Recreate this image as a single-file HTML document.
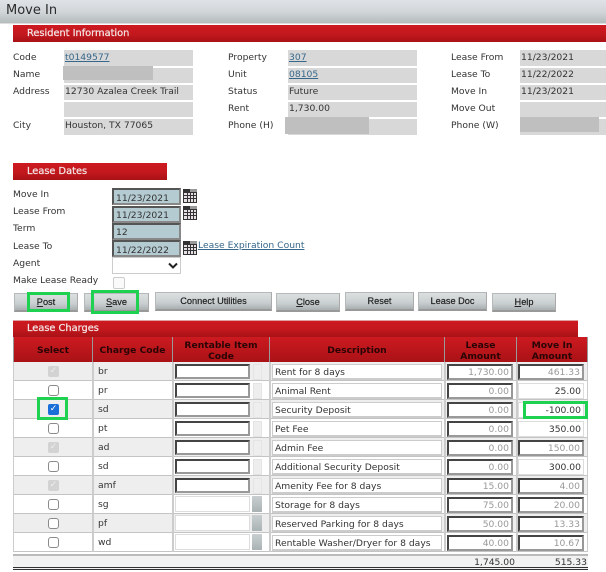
<!DOCTYPE html>
<html><head><meta charset="utf-8"><style>
html,body{margin:0;padding:0;background:#fff}
#p{position:relative;width:606px;height:572px;overflow:hidden;background:#fff;font:9.2px "DejaVu Sans",sans-serif;color:#333;filter:blur(.25px)}
#p div,#p a,#p svg{position:absolute;box-sizing:border-box;white-space:nowrap}
.t{height:14px;line-height:16px}
.b{background:#d8d8d8;line-height:13px;padding-left:1px;color:#333}
.g{background:#bfbfbf}
.red{background:linear-gradient(#cc1a20,#c4181e 50%,#a91216);color:#f3e4e4;font-weight:normal;line-height:18px;font-size:9.8px;padding-left:14px;-webkit-text-stroke:.25px #f3e4e4}
a{color:#36678a;text-decoration:underline}
.d{left:112px;width:69px;background:#b5cbd2;border:2px solid;border-color:#555 #888 #888 #555;line-height:15px;padding-left:2px;padding-top:1px}
.btn{background:linear-gradient(#dcdfe0,#c9cfd0 60%,#a9b0b0);border:1px solid #b5b9b9;border-bottom:2px solid #999;border-right-color:#aaa;text-align:center;font:9.2px "Liberation Sans",sans-serif;color:#222;height:19px;line-height:17px;font-weight:500;-webkit-text-stroke:.2px #222}
.gr{border:3px solid #1fd150}
.h{top:337px;height:25px;background:linear-gradient(#cc1a20,#a91216);border-right:1px solid #999;color:#2a0505;font-weight:bold;text-align:center;line-height:11px;font-size:9.2px}
.r{left:13px;width:575px;height:19px;border-bottom:1px solid #c4c4c4}
.o{background:#eee}
.e{background:#fff}
.v{width:2px;top:362px;height:190px;background:#ccc}
.c{left:48px;width:11px;height:11px;border:1px solid #8a8a8a;border-radius:3px;background:#fff}
.x{left:48px;width:11px;height:11px;border-radius:2px;background:#d3d3d3;color:#eee;font-size:9px;line-height:11px;text-align:center;font-weight:bold}
.code{left:98px;height:14px;line-height:16px}
.i{left:175px;width:75px;height:15px;background:#fff;border:2px solid;border-color:#444 #999 #999 #444}
.il{left:175px;width:75px;height:16px;background:#fff;border:1px solid #ddd}
.s{left:253px;width:9px;height:16px;background:#eee;border:1px solid #e4e4e4}
.sd{left:252px;width:10px;height:16px;background:linear-gradient(#c9cfd0,#a9b2b4)}
.ds{left:272px;width:170px;height:16px;background:#fff;border:1px solid #ccc;border-bottom:2px solid #ccc;line-height:15px;padding-left:2px}
.n{height:16px;border:2px solid;border-color:#444 #999 #999 #444;background:#fff;text-align:right;line-height:14px;padding-right:2px;color:#999;width:66px}
.l{left:447px}
.m{left:518px}
.nl{border:1px solid #ddd;color:#333;line-height:16px}
</style></head><body><div id="p">
<div style="left:0;top:0;width:606px;height:23px;background:linear-gradient(#dfe2e6,#d2d6d9 50%,#b5bcbc)"></div>
<div style="left:0;top:23px;width:606px;height:1px;background:#ddd"></div>
<div style="left:6px;top:1px;height:20px;font:13px/20px 'DejaVu Sans',sans-serif;color:#2b2b2b">Move In</div>
<div class="red" style="left:13px;top:25px;width:593px;height:17px">Resident Information</div>

<div class="t" style="left:13px;top:50px">Code</div>
<div class="t" style="left:13px;top:67px">Name</div>
<div class="t" style="left:13px;top:84px">Address</div>
<div class="t" style="left:13px;top:118px">City</div>
<div class="b" style="left:64px;top:50px;width:129px;height:16px;line-height:15px"><a href="#" style="position:static">t0149577</a></div>
<div class="b" style="left:64px;top:68px;width:129px;height:15px"></div>
<div class="g" style="left:63px;top:66px;width:90px;height:14px"></div>
<div class="b" style="left:64px;top:85px;width:129px;height:15px">12730 Azalea Creek Trail</div>
<div class="b" style="left:64px;top:102px;width:129px;height:15px"></div>
<div class="b" style="left:64px;top:119px;width:129px;height:16px">Houston, TX 77065</div>

<div class="t" style="left:228px;top:50px">Property</div>
<div class="t" style="left:228px;top:67px">Unit</div>
<div class="t" style="left:228px;top:84px">Status</div>
<div class="t" style="left:228px;top:101px">Rent</div>
<div class="t" style="left:228px;top:118px">Phone (H)</div>
<div class="b" style="left:288px;top:50px;width:129px;height:16px;line-height:15px"><a href="#" style="position:static">307</a></div>
<div class="b" style="left:288px;top:68px;width:129px;height:15px"><a href="#" style="position:static">08105</a></div>
<div class="b" style="left:288px;top:85px;width:129px;height:15px">Future</div>
<div class="b" style="left:288px;top:102px;width:129px;height:15px">1,730.00</div>
<div class="b" style="left:288px;top:119px;width:129px;height:16px"></div>
<div class="g" style="left:285px;top:117px;width:84px;height:17px"></div>

<div class="t" style="left:451px;top:50px">Lease From</div>
<div class="t" style="left:451px;top:67px">Lease To</div>
<div class="t" style="left:451px;top:84px">Move In</div>
<div class="t" style="left:451px;top:101px">Move Out</div>
<div class="t" style="left:451px;top:118px">Phone (W)</div>
<div class="b" style="left:520px;top:50px;width:86px;height:16px;line-height:15px">11/23/2021</div>
<div class="b" style="left:520px;top:68px;width:86px;height:15px">11/22/2022</div>
<div class="b" style="left:520px;top:85px;width:86px;height:15px">11/23/2021</div>
<div class="b" style="left:520px;top:102px;width:86px;height:15px"></div>
<div class="b" style="left:520px;top:119px;width:86px;height:16px"></div>
<div class="g" style="left:520px;top:117px;width:79px;height:15px"></div>

<div class="red" style="left:13px;top:163px;width:154px;height:17px">Lease Dates</div>
<div class="t" style="left:13px;top:187px">Move In</div>
<div class="t" style="left:13px;top:204px">Lease From</div>
<div class="t" style="left:13px;top:221px">Term</div>
<div class="t" style="left:13px;top:239px">Lease To</div>
<div class="t" style="left:13px;top:256px">Agent</div>
<div class="t" style="left:13px;top:273px">Make Lease Ready</div>
<div class="d" style="top:188px;height:17px;line-height:13px;padding-top:2px">11/23/2021</div>
<div class="d" style="top:206px;height:17px;line-height:13px;padding-top:1px">11/23/2021</div>
<div class="d" style="top:223px;height:17px;line-height:13px;padding-top:1px">12</div>
<div class="d" style="top:240px;height:17px;line-height:13px;padding-top:2px">11/22/2022</div>
<svg style="left:183px;top:189px" width="14" height="14" viewBox="0 0 14 14"><rect width="14" height="14" fill="#333"/><rect x="7" width="7" height="3" fill="#999"/><path d="M1 4h3v2H1zM5 4h2v2H5zM8 4h2v2H8zM11 4h2v2h-2zM1 7h3v2H1zM5 7h2v2H5zM8 7h2v2H8zM11 7h2v2h-2zM1 10h3v3H1zM5 10h2v3H5zM8 10h2v3H8zM11 10h2v3h-2z" fill="#e6e0e4"/></svg>
<svg style="left:183px;top:206px" width="14" height="14" viewBox="0 0 14 14"><rect width="14" height="14" fill="#333"/><rect x="7" width="7" height="3" fill="#999"/><path d="M1 4h3v2H1zM5 4h2v2H5zM8 4h2v2H8zM11 4h2v2h-2zM1 7h3v2H1zM5 7h2v2H5zM8 7h2v2H8zM11 7h2v2h-2zM1 10h3v3H1zM5 10h2v3H5zM8 10h2v3H8zM11 10h2v3h-2z" fill="#e6e0e4"/></svg>
<svg style="left:183px;top:241px" width="14" height="14" viewBox="0 0 14 14"><rect width="14" height="14" fill="#333"/><rect x="7" width="7" height="3" fill="#999"/><path d="M1 4h3v2H1zM5 4h2v2H5zM8 4h2v2H8zM11 4h2v2h-2zM1 7h3v2H1zM5 7h2v2H5zM8 7h2v2H8zM11 7h2v2h-2zM1 10h3v3H1zM5 10h2v3H5zM8 10h2v3H8zM11 10h2v3h-2z" fill="#e6e0e4"/></svg>
<a href="#" class="t" style="left:198px;top:238px">Lease Expiration Count</a>
<div style="left:112px;top:257px;width:69px;height:17px;background:#fff;border:1px solid #ccc"></div>
<svg style="left:168px;top:262px" width="10" height="7" viewBox="0 0 10 7"><path d="M1 1.5L5 5.5L9 1.5" fill="none" stroke="#222" stroke-width="2"/></svg>
<div style="left:113px;top:277px;width:12px;height:12px;border:1px solid #ccc;border-radius:2px;background:#fafafa"></div>

<div class="btn" style="left:14px;top:293px;width:64px"><u>P</u>ost</div>
<div class="btn" style="left:84px;top:293px;width:65px"><u>S</u>ave</div>
<div class="btn" style="left:155px;top:292px;width:117px">Connect Utilities</div>
<div class="btn" style="left:276px;top:293px;width:64px"><u>C</u>lose</div>
<div class="btn" style="left:345px;top:292px;width:69px">Reset</div>
<div class="btn" style="left:418px;top:292px;width:69px">Lease Doc</div>
<div class="btn" style="left:492px;top:293px;width:64px"><u>H</u>elp</div>
<div class="gr" style="left:27px;top:292px;width:43px;height:20px"></div>
<div class="gr" style="left:91px;top:290px;width:48px;height:24px"></div>

<div class="red" style="left:13px;top:320px;width:565px;height:17px;box-shadow:inset 0 1px 0 #e0a0a0">Lease Charges</div>
<div class="h" style="left:13px;width:80px;line-height:27px;border-left:1px solid #999">Select</div>
<div class="h" style="left:93px;width:80px;line-height:27px">Charge Code</div>
<div class="h" style="left:173px;width:97px;padding-top:3px">Rentable Item<br>Code</div>
<div class="h" style="left:270px;width:175px;line-height:27px">Description</div>
<div class="h" style="left:445px;width:72px;padding-top:3px">Lease<br>Amount</div>
<div class="h" style="left:517px;width:71px;padding-top:3px">Move In<br>Amount</div>

<div class="r o" style="top:362px"></div><div class="r e" style="top:381px"></div><div class="r o" style="top:400px"></div><div class="r e" style="top:419px"></div><div class="r o" style="top:438px"></div><div class="r e" style="top:457px"></div><div class="r o" style="top:476px"></div><div class="r e" style="top:495px"></div><div class="r o" style="top:514px"></div><div class="r e" style="top:533px"></div>
<div class="v" style="left:13px;width:1px"></div><div class="v" style="left:92px"></div><div class="v" style="left:172px"></div><div class="v" style="left:269px"></div><div class="v" style="left:444px"></div><div class="v" style="left:516px"></div><div class="v" style="left:587px;width:1px"></div>

<div class="x" style="top:366px">✓</div><div class="c" style="top:385px"></div>
<div style="left:48px;top:404px;width:11px;height:11px;border-radius:2px;background:#1a6fd8;color:#fff;font-size:9px;line-height:11px;text-align:center;font-weight:bold">✓</div>
<div class="gr" style="left:37px;top:397px;width:31px;height:23px"></div>
<div class="c" style="top:423px"></div><div class="x" style="top:442px">✓</div><div class="c" style="top:461px"></div><div class="x" style="top:480px">✓</div><div class="c" style="top:499px"></div><div class="c" style="top:518px"></div><div class="c" style="top:537px"></div>

<div class="code" style="top:364px">br</div><div class="code" style="top:383px">pr</div><div class="code" style="top:402px">sd</div><div class="code" style="top:421px">pt</div><div class="code" style="top:440px">ad</div><div class="code" style="top:459px">sd</div><div class="code" style="top:478px">amf</div><div class="code" style="top:497px">sg</div><div class="code" style="top:516px">pf</div><div class="code" style="top:535px">wd</div>

<div class="i" style="top:364px"></div><div class="i" style="top:383px"></div><div class="i" style="top:402px"></div><div class="i" style="top:421px"></div><div class="i" style="top:440px"></div><div class="i" style="top:459px"></div><div class="i" style="top:478px"></div>
<div class="il" style="top:496px"></div><div class="il" style="top:515px"></div><div class="il" style="top:534px"></div>
<div class="s" style="top:364px"></div><div class="s" style="top:383px"></div><div class="s" style="top:402px"></div><div class="s" style="top:421px"></div><div class="s" style="top:440px"></div><div class="s" style="top:459px"></div><div class="s" style="top:478px"></div>
<div class="sd" style="top:496px"></div><div class="sd" style="top:515px"></div><div class="sd" style="top:534px"></div>

<div class="ds" style="top:364px">Rent for 8 days</div><div class="ds" style="top:383px">Animal Rent</div><div class="ds" style="top:402px">Security Deposit</div><div class="ds" style="top:421px">Pet Fee</div><div class="ds" style="top:440px">Admin Fee</div><div class="ds" style="top:459px">Additional Security Deposit</div><div class="ds" style="top:478px">Amenity Fee for 8 days</div><div class="ds" style="top:497px">Storage for 8 days</div><div class="ds" style="top:516px">Reserved Parking for 8 days</div><div class="ds" style="top:535px">Rentable Washer/Dryer for 8 days</div>

<div class="n l" style="top:364px">1,730.00</div><div class="n l" style="top:383px">0.00</div><div class="n l" style="top:402px">0.00</div><div class="n l" style="top:421px">0.00</div><div class="n l" style="top:440px">0.00</div><div class="n l" style="top:459px">0.00</div><div class="n l" style="top:478px">15.00</div><div class="n l" style="top:497px">75.00</div><div class="n l" style="top:516px">50.00</div><div class="n l" style="top:535px">40.00</div>
<div class="n m" style="top:364px">461.33</div><div class="n m nl" style="top:383px">25.00</div><div class="n m nl" style="top:402px">-100.00</div><div class="n m nl" style="top:421px">350.00</div><div class="n m" style="top:440px">150.00</div><div class="n m nl" style="top:459px">300.00</div><div class="n m" style="top:478px">4.00</div><div class="n m" style="top:497px">20.00</div><div class="n m" style="top:516px">13.33</div><div class="n m" style="top:535px">10.67</div>
<div class="gr" style="left:523px;top:401px;width:65px;height:18px"></div>

<div style="left:13px;top:554px;width:575px;height:16px;background:#f2f2f2;border-top:2px solid #bbb;border-bottom:3px double #333"></div>
<div class="t" style="left:445px;top:555px;width:70px;text-align:right">1,745.00</div>
<div class="t" style="left:517px;top:555px;width:70px;text-align:right">515.33</div>
</div></body></html>
